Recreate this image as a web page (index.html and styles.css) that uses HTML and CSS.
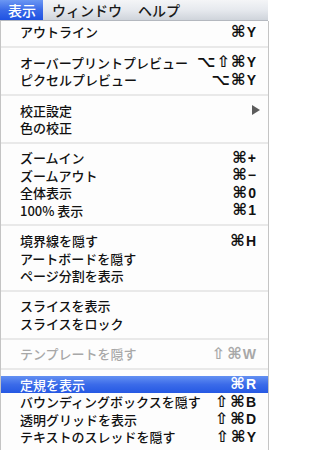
FILE: index.html
```html
<!DOCTYPE html>
<html lang="ja">
<head>
<meta charset="utf-8">
<link rel="stylesheet" href="styles.css">
</head>
<body>
<div class="menubar">
  <span class="mb-item active">表示</span>
  <span class="mb-item window">ウィンドウ</span>
  <span class="mb-item help">ヘルプ</span>
</div>
<div class="menu">
  <div class="row"><span class="label">アウトライン</span><span class="key"><span class="sym">⌘</span>Y</span></div>
  <div class="sep"></div>
  <div class="row"><span class="label">オーバープリントプレビュー</span><span class="key"><span class="sym">⌥</span><span class="sym">⇧</span><span class="sym">⌘</span>Y</span></div>
  <div class="row"><span class="label">ピクセルプレビュー</span><span class="key"><span class="sym">⌥</span><span class="sym">⌘</span>Y</span></div>
  <div class="sep"></div>
  <div class="row"><span class="label">校正設定</span><span class="arrow"></span></div>
  <div class="row"><span class="label">色の校正</span></div>
  <div class="sep"></div>
  <div class="row"><span class="label">ズームイン</span><span class="key"><span class="sym">⌘</span>+</span></div>
  <div class="row"><span class="label">ズームアウト</span><span class="key"><span class="sym">⌘</span>−</span></div>
  <div class="row"><span class="label">全体表示</span><span class="key"><span class="sym">⌘</span>0</span></div>
  <div class="row"><span class="label">100% 表示</span><span class="key"><span class="sym">⌘</span>1</span></div>
  <div class="sep"></div>
  <div class="row"><span class="label">境界線を隠す</span><span class="key"><span class="sym">⌘</span>H</span></div>
  <div class="row"><span class="label">アートボードを隠す</span></div>
  <div class="row"><span class="label">ページ分割を表示</span></div>
  <div class="sep"></div>
  <div class="row"><span class="label">スライスを表示</span></div>
  <div class="row"><span class="label">スライスをロック</span></div>
  <div class="sep"></div>
  <div class="row disabled"><span class="label">テンプレートを隠す</span><span class="key"><span class="sym gap">⇧</span><span class="sym">⌘</span>W</span></div>
  <div class="sep"></div>
  <div class="row selected"><span class="label">定規を表示</span><span class="key"><span class="sym">⌘</span>R</span></div>
  <div class="row"><span class="label">バウンディングボックスを隠す</span><span class="key"><span class="sym gap">⇧</span><span class="sym">⌘</span>B</span></div>
  <div class="row"><span class="label">透明グリッドを表示</span><span class="key"><span class="sym gap">⇧</span><span class="sym">⌘</span>D</span></div>
  <div class="row"><span class="label">テキストのスレッドを隠す</span><span class="key"><span class="sym gap">⇧</span><span class="sym">⌘</span>Y</span></div>
</div>
</body>
</html>
```
FILE: styles.css
```css
html, body {
  margin: 0;
  padding: 0;
  background: #ffffff;
}
body {
  width: 271px;
  height: 450px;
  overflow: hidden;
  font-family: "Liberation Sans", "Noto Sans CJK JP", sans-serif;
  color: #111;
}
.menubar {
  width: 268px;
  height: 20px;
  display: flex;
  align-items: center;
  background: linear-gradient(#f4f5f7, #e6e9ee 50%, #cfd4db);
  border-bottom: 1px solid #b4b8bf;
  font-family: "Noto Sans CJK JP", sans-serif;
  font-size: 14px;
  font-weight: 500;
}
.mb-item {
  height: 20px;
  line-height: 20px;
  color: #1a1a1a;
  white-space: nowrap;
}
.mb-item.active {
  color: #fff;
  padding: 0 7px 0 8px;
  background: linear-gradient(#6b97f3, #3a6ae8 50%, #1f52e2);
}
.mb-item.window {
  margin-left: 9px;
}
.mb-item.help {
  margin-left: 16px;
}
.menu {
  border-left: 1px solid #c4c4c4;
  border-right: 1px solid #c4c4c4;
  box-sizing: border-box;
  width: 269px;
  padding-top: 2px;
  height: 429px;
  background: #fdfdfd;
}
.row {
  height: 17.45px;
  display: flex;
  align-items: center;
  justify-content: space-between;
  padding: 0 12px 0 19px;
  font-size: 13px;
}
.label {
  font-family: "Noto Sans CJK JP", sans-serif;
  font-weight: 500;
  white-space: nowrap;
}
.key {
  display: flex;
  align-items: center;
  font-family: "Liberation Sans", "DejaVu Sans", sans-serif;
  font-size: 14px;
  font-weight: bold;
  white-space: nowrap;
  line-height: 1;
}
.sym {
  font-family: "DejaVu Sans", sans-serif;
  font-size: 16px;
  font-weight: bold;
  margin-right: 1px;
}
.sym.gap {
  margin-right: 2px;
}
.arrow {
  width: 0;
  height: 0;
  border-left: 8px solid #5c5c5c;
  border-top: 5px solid transparent;
  border-bottom: 5px solid transparent;
  margin-right: -4px;
}
.sep {
  height: 13px;
  display: flex;
  align-items: center;
}
.sep::before {
  content: "";
  display: block;
  width: 100%;
  height: 2px;
  background: #e9e9e9;
}
.disabled {
  color: #a8a8a8;
}
.selected {
  color: #fff;
  background: linear-gradient(#6390f2, #3b6be9 50%, #2558e3);
}
```
